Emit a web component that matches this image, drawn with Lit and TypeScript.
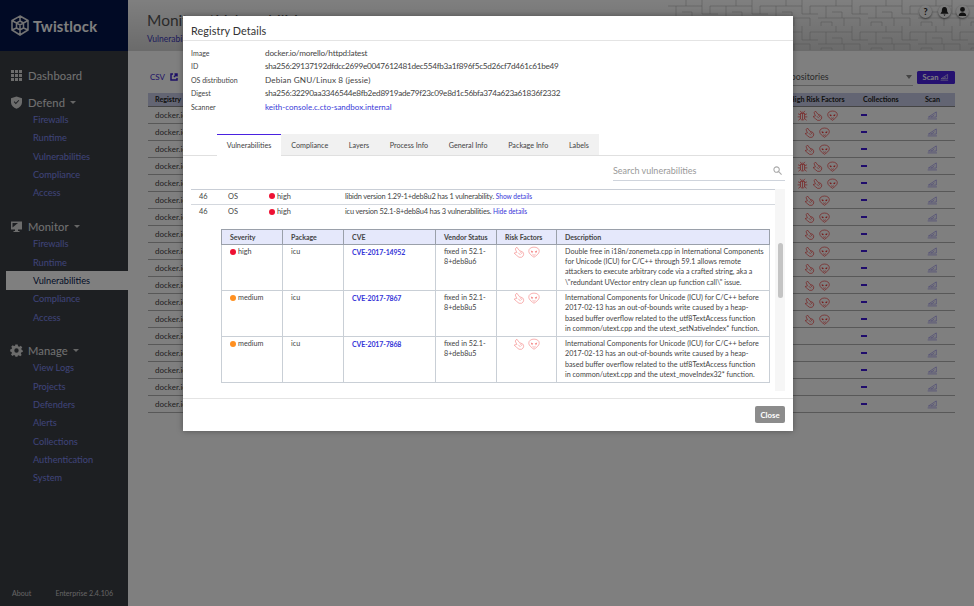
import { LitElement, html, css, svg } from "lit";
import { customElement } from "lit/decorators.js";

const hand = (cls = "risk") => html`<svg class=${cls} viewBox="0 0 16 16"><path d="M5 1.5 L8.5 6 L13 8 C15 10 14.5 13.5 11.5 15 L8 15 C6 13.5 3.5 11.5 1.5 9.5 L5 8.5 L3 4 Z M7 9 L10 12 M9.5 7.5 L12 10.5" /></svg>`;
const skull = (cls = "risk") => html`<svg class=${cls} viewBox="0 0 16 16"><path d="M8 1.5 C12 1.5 15 3.5 15 7 C15 10 11 13 8 15 C5 13 1 10 1 7 C1 3.5 4 1.5 8 1.5 Z M6 11 C7 12.5 9 12.5 10 11" /><path class="fill" d="M3.8 6 L7 7.2 L6 9 L4.3 8.6 Z M12.2 6 L9 7.2 L10 9 L11.7 8.6 Z" /></svg>`;
const bug = () => html`<svg class="risk" viewBox="0 0 16 16"><path d="M5 5 H11 V13 C10 15 6 15 5 13 Z M5.5 5 C6 2.5 10 2.5 10.5 5 M8 5 V14 M5 7 L1.5 5.5 M11 7 L14.5 5.5 M5 10 H1 M11 10 H15 M5 12.5 L2 15 M11 12.5 L14 15 M6 3 L4.5 1.2 M10 3 L11.5 1.2" /></svg>`;
const scan = (cls = "scan-ic") => html`<svg class=${cls} viewBox="0 0 16 14"><path d="M2 10 L13.5 2.5 V10 Z M6 10 L11 6.5 M1 12.7 H14.5" /></svg>`;

const links1 = ["Firewalls", "Runtime", "Vulnerabilities", "Compliance", "Access"];
const links2 = ["View Logs", "Projects", "Defenders", "Alerts", "Collections", "Authentication", "System"];

const bgRows: number[] = [3, 2, 2, 3, 3, 2, 2, 2, 2, 2, 2, 2, 2, 0, 0, 0, 0, 0];

const meta = [
  ["Image", "docker.io/morello/httpd:latest", "img"],
  ["ID", "sha256:29137192dfdcc2699e0047612481dec554fb3a1f896f5c5d26cf7d461c61be49", "hash"],
  ["OS distribution", "Debian GNU/Linux 8 (jessie)", "os"],
  ["Digest", "sha256:32290aa3346544e8fb2ed8919ade79f23c09e8d1c56bfa374a623a61836f2332", "hash"],
];
const tabs = ["Vulnerabilities", "Compliance", "Layers", "Process Info", "General Info", "Package Info", "Labels"];

const vulns = [
  { sev: "high", cve: "CVE-2017-14952", fix: "fixed in 52.1-8+deb8u6", lines: ["Double free in i18n/zonemeta.cpp in International Components", "for Unicode (ICU) for C/C++ through 59.1 allows remote", "attackers to execute arbitrary code via a crafted string, aka a", "\\\"redundant UVector entry clean up function call\\\" issue."] },
  { sev: "medium", cve: "CVE-2017-7867", fix: "fixed in 52.1-8+deb8u5", lines: ["International Components for Unicode (ICU) for C/C++ before", "2017-02-13 has an out-of-bounds write caused by a heap-", "based buffer overflow related to the utf8TextAccess function", "in common/utext.cpp and the utext_setNativeIndex* function."] },
  { sev: "medium", cve: "CVE-2017-7868", fix: "fixed in 52.1-8+deb8u5", lines: ["International Components for Unicode (ICU) for C/C++ before", "2017-02-13 has an out-of-bounds write caused by a heap-", "based buffer overflow related to the utf8TextAccess function", "in common/utext.cpp and the utext_moveIndex32* function."] },
];

const patternCells = svg`<pattern id="circ" width="50" height="26" patternUnits="userSpaceOnUse"><path d="M0 6 H18 V0 M18 6 H34 V14 H50 M8 6 V18 H26 V26 M26 18 H42 V26 M34 6 V0 M0 18 H8 M14 12 H24 V18 M42 14 V6 H50 M3 26 V22 H14 V26" /></pattern>`;

@customElement("app-root")
export class AppRoot extends LitElement {
  static styles = css`
    :host { display: block; position: relative; width: 974px; height: 606px; overflow: hidden; font-family: Lato, "Liberation Sans", sans-serif; color: #333; background: #fff; }
    * { box-sizing: border-box; }
    .page { display: flex; width: 974px; height: 606px; }
    .side { width: 128px; flex: none; background: #3b3e45; display: flex; flex-direction: column; position: relative; }
    .brand { height: 51px; background: #03154a; display: flex; align-items: center; padding-left: 10px; gap: 3px; color: #fff; font-size: 14.8px; font-weight: 700; letter-spacing: .2px; flex: none; }
    .brand svg { width: 20px; height: 21px; fill: none; stroke: #e6e6e6; stroke-width: 1.5; }
    .collapse { position: absolute; left: 128px; top: 0; width: 6px; height: 18px; background: #03154a; display: flex; align-items: center; justify-content: center; }
    .collapse i { border-right: 4px solid #aaa; border-top: 3px solid transparent; border-bottom: 3px solid transparent; }
    nav { display: flex; flex-direction: column; padding-top: 16px; flex: 1; }
    .sec { height: 18px; display: flex; align-items: center; padding: 0 0 2px 10px; gap: 5px; color: #e2e2e2; font-size: 11.2px; letter-spacing: .1px; }
    .sec svg { width: 13px; height: 13px; fill: #d8d8d8; flex: none; }
    .sec .car { border-top: 3px solid #ccc; border-left: 3px solid transparent; border-right: 3px solid transparent; }
    .sub { display: flex; flex-direction: column; margin-top: -1.5px; }
    .sub a { height: 18.33px; display: flex; align-items: center; padding-left: 33px; font-size: 9.2px; color: #7f89ee; }
    .sub a.on { margin-left: 6px; padding-left: 27px; background: #fff; color: #03154a; }
    .g1 { margin-top: 9px; }
    .g2 { margin-top: 16px; }
    .foot { height: 26px; display: flex; justify-content: space-between; padding: 0 15px 0 12px; font-size: 7.1px; color: #c8c8c8; align-items: center; }
    .main { flex: 1; display: flex; flex-direction: column; min-width: 0; }
    .top { height: 51px; flex: none; position: relative; background: linear-gradient(#fff, #d6d6d6); overflow: hidden; padding: 11px 0 0 19px; }
    .top h1 { margin: 0; font-size: 15.5px; font-weight: 400; color: #555; }
    .top .crumb { margin-top: 5px; font-size: 8.5px; color: #3b37b8; }
    .circ { position: absolute; left: 540px; top: 0; width: 306px; height: 50px; fill: none; }
    .circ path { stroke: #a8a8a8; stroke-width: .5; fill: none; }
    .tools { position: absolute; right: 5px; top: 5px; display: flex; gap: 5.5px; }
    .tools span { width: 13px; height: 13px; border-radius: 50%; background: #f6f6f6; box-shadow: 0 1px 2px rgba(0, 0, 0, .5); color: #222; font-size: 9px; font-weight: 700; display: flex; align-items: center; justify-content: center; }
    .tools svg { width: 9px; height: 9px; fill: #222; }
    .content { flex: 1; padding: 0 19px 0 20px; display: flex; flex-direction: column; }
    .bar { height: 42px; display: flex; align-items: center; justify-content: space-between; padding-top: 10px; }
    .csv { margin-left: 2px; display: flex; align-items: center; gap: 5px; font-size: 8px; color: #3b1fd0; }
    .csv svg { width: 8px; height: 8px; fill: none; stroke: #3b1fd0; stroke-width: 1.5; }
    .filter { display: flex; align-items: center; gap: 4px; }
    .repo { width: 245px; height: 18px; border-bottom: 1px solid #bbb; display: flex; align-items: center; justify-content: space-between; padding-left: 113px; font-size: 8.8px; color: #555; }
    .repo i { border-top: 4px solid #888; border-left: 3px solid transparent; border-right: 3px solid transparent; margin-right: 1px; }
    .btn { width: 38px; height: 13px; background: #4a22e0; color: #fff; border-radius: 1.5px; font-size: 7.5px; font-weight: 700; display: flex; align-items: center; justify-content: center; gap: 2px; }
    .scan-w { width: 9px; height: 8px; fill: none; stroke: #fff; stroke-width: 1; }
    .thead, .trow { display: grid; grid-template-columns: 640px 58px 64px 1fr; align-items: center; }
    .thead { height: 14px; background: #c6cbe6; border-bottom: 1px solid #888; font-size: 7.2px; font-weight: 700; color: #222; white-space: nowrap; }
    .thead span:first-child, .trow span:first-child { padding-left: 7px; }
    .thead .pad { padding-left: 17px; }
    .thead .c, .trow .c { text-align: center; display: flex; justify-content: center; align-items: center; gap: 4px; }
    .trow { height: 17px; border-bottom: 1px solid #b0b0b0; font-size: 8px; color: #444; }
    .risk { width: 11px; height: 11px; fill: none; stroke: #f03c3c; stroke-width: 1; }
    .risk .fill { fill: #f03c3c; stroke: none; }
    .dash { display: block; width: 6px; height: 2.5px; background: #3f18d8; margin-left: 15px; }
    .scan-ic { width: 11px; height: 10px; fill: none; stroke: #8a82e8; stroke-width: .9; }
    .scrim { position: absolute; inset: 0; background: rgba(0, 0, 0, .5); }
    .modal { position: absolute; left: 183px; top: 16px; width: 610px; height: 415px; background: #fff; box-shadow: 0 0 6px rgba(0, 0, 0, .35); display: flex; flex-direction: column; }
    .mh { height: 25px; flex: none; border-bottom: 1px solid #e4e4e4; padding: 7px 0 0 8px; font-size: 10.8px; color: #333; line-height: 15px; letter-spacing: .1px; }
    .meta { padding: 5px 0 0 8px; height: 93px; flex: none; }
    .meta div { display: grid; grid-template-columns: 74px 1fr; height: 13.5px; align-items: center; font-size: 8.2px; color: #444; white-space: nowrap; }
    .meta b { font-weight: 400; font-size: 7px; color: #444; }
    .meta a { color: #3a3ad8; font-size: 8px; }
    .meta .hash { letter-spacing: -.3px; }
    .meta .img { letter-spacing: -.19px; }
    .meta .os { letter-spacing: .13px; }
    .tabs { height: 22px; flex: none; border-bottom: 1px solid #e0e0e0; padding-left: 34px; display: flex; }
    .tabs span { height: 21px; background: #f1f1f1; padding: 1px 10.3px 0; display: flex; align-items: center; font-size: 7.2px; color: #444; white-space: nowrap; }
    .tabs span.on { background: #fff; border-top: 1.5px solid #4a22e0; height: 22px; padding: 0 10px; width: 64px; justify-content: center; }
    .search { height: 33px; flex: none; padding: 0 8px 8px 430px; display: flex; align-items: flex-end; }
    .search div { flex: 1; height: 25px; border-bottom: 1px solid #cfd4dc; display: flex; align-items: center; justify-content: space-between; font-size: 9px; color: #999; padding: 4px 0 0; }
    .search svg { width: 9px; height: 9px; fill: none; stroke: #aaa; stroke-width: 1.2; margin-right: 3px; }
    .pane { height: 202px; flex: none; margin: 0 8px; display: flex; overflow: hidden; }
    .list { flex: 1; min-width: 0; border-top: 1px solid #c9ced6; }
    .track { width: 10px; flex: none; background: #f6f6f6; padding: 54px 2px 0 3px; }
    .track i { display: block; height: 55px; background: #c4c4c4; border-radius: 3px; }
    .vr { height: 15px; display: grid; grid-template-columns: 29px 41px 76px 1fr; align-items: center; font-size: 7.4px; color: #444; border-bottom: 1px solid #d4d8de; padding: 0 0 2px 8px; white-space: nowrap; }
    .vr:nth-child(2) { border-bottom: 0; }
    .msg { letter-spacing: -.18px; }
    .vr a { color: #3535d8; font-size: 6.6px; letter-spacing: 0; }
    .sev { display: flex; align-items: center; gap: 2px; }
    .dot { width: 6px; height: 6px; border-radius: 50%; background: #ee1133; flex: none; }
    .dot.medium { background: #ff9020; }
    table { border-collapse: collapse; table-layout: fixed; width: 549px; margin: 8.5px 0 0 30px; font-size: 7.2px; color: #444; line-height: 10.3px; }
    th, td { border: 1px solid #c9cfd6; padding: 2px 8px; text-align: left; vertical-align: top; overflow: hidden; }
    th { background: #e5e8fb; height: 14.5px; border-color: #9aa0aa; font-weight: 700; color: #444; font-size: 7px; white-space: nowrap; }
    tbody tr { height: 45px; }
    td a { color: #3535d8; font-weight: 700; font-size: 7px; letter-spacing: -.15px; }
    td.desc { font-size: 7.15px; white-space: nowrap; }
    td.rf { padding: 1px 0 0; }
    td.rf div { display: flex; justify-content: center; gap: 3px; }
    .rm { width: 12px; height: 12px; fill: none; stroke: #f58c8c; stroke-width: .9; }
    .rm .fill { fill: #f58c8c; stroke: none; }
    .mf { flex: 1; margin-top: 7px; border-top: 1px solid #e4e4e4; display: flex; justify-content: flex-end; padding: 7px 8px 0 0; align-items: flex-start; }
    .close { width: 30px; height: 17px; background: #8c8c8c; color: #fff; font-size: 7.8px; font-weight: 700; border-radius: 2px; display: flex; align-items: center; justify-content: center; }
  `;

  private renderSide() {
    return html`<aside class="side">
      <div class="brand">
        <svg viewBox="0 0 20 21"><path d="M10 1 L18 5.5 V15 L10 20 L2 15 V5.5 Z M10 1 V6 M2 5.5 L6.5 8 M18 5.5 L13.5 8 M10 6 L13.5 8 V13 L10 15 L6.5 13 V8 Z M10 15 V20 M6.5 13 L2 15 M13.5 13 L18 15 M10 10 V15 M6.5 8 L10 10 L13.5 8" /></svg>
        <span>Twistlock</span>
      </div>
      <div class="collapse"><i></i></div>
      <nav>
        <div class="sec"><svg viewBox="0 0 13 13"><path d="M1 1h3v3H1zM5 1h3v3H5zM9 1h3v3H9zM1 5h3v3H1zM5 5h3v3H5zM9 5h3v3H9zM1 9h3v3H1zM5 9h3v3H5zM9 9h3v3H9z" /></svg>Dashboard</div>
        <div class="sec g1"><svg viewBox="0 0 13 13"><path fill-rule="evenodd" d="M6.5 .5 L12 2.2 V6.5 C12 9.5 9.5 11.5 6.5 12.8 C3.5 11.5 1 9.5 1 6.5 V2.2 Z M3.8 6 L5.8 8.2 L9.3 4.6 L8.5 3.9 L5.8 6.7 L4.5 5.3 Z" /></svg>Defend<span class="car"></span></div>
        <div class="sub">${links1.map((l) => html`<a>${l}</a>`)}</div>
        <div class="sec g2"><svg viewBox="0 0 13 13"><path fill-rule="evenodd" d="M1 1.5 H12 V9.5 H8 V11 H9.5 V12 H3.5 V11 H5 V9.5 H1 Z M2.5 7.5 L8 3 H2.5 Z" /></svg>Monitor<span class="car"></span></div>
        <div class="sub">${links1.map((l, i) => html`<a class=${i === 2 ? "on" : ""}>${l}</a>`)}</div>
        <div class="sec g2"><svg viewBox="0 0 13 13"><path fill-rule="evenodd" d="M5.3 .5 H7.7 L8 2.2 L9.4 2.8 L10.8 1.8 L12.3 3.5 L11.2 4.8 L11.8 6 L12.8 6.5 V8 L11.4 8.3 L10.8 9.6 L11.7 11 L10.2 12.3 L8.8 11.3 L7.7 11.7 L7.5 12.8 H5.4 L5.1 11.5 L3.9 11 L2.5 11.9 L1 10.4 L2 9 L1.5 7.9 L.2 7.6 V5.5 L1.6 5.1 L2.1 4 L1.2 2.7 L2.7 1.2 L4 2.1 L5.1 1.7 Z M6.5 4.3 A2.2 2.2 0 1 0 6.5 8.7 A2.2 2.2 0 1 0 6.5 4.3 Z" /></svg>Manage<span class="car"></span></div>
        <div class="sub">${links2.map((l) => html`<a>${l}</a>`)}</div>
      </nav>
      <div class="foot"><span>About</span><span>Enterprise 2.4.106</span></div>
    </aside>`;
  }

  private renderBack() {
    return html`<main class="main">
      <header class="top">
        <svg class="circ"><defs>${patternCells}</defs><rect width="306" height="50" fill="url(#circ)" /></svg>
        <h1>Monitor / Vulnerabilities</h1>
        <div class="crumb">Vulnerabilities</div>
        <div class="tools">
          <span>?</span>
          <span><svg viewBox="0 0 10 10"><path d="M5 0 C7.5 0 8 2 8 5 L9.5 7.5 H.5 L2 5 C2 2 2.5 0 5 0 Z M3.8 8.3 H6.2 L5 10 Z" /></svg></span>
          <span><svg viewBox="0 0 10 10"><path d="M5 0 A2.5 2.5 0 1 1 5 5.4 A2.5 2.5 0 1 1 5 0 Z M.8 10 C.8 6.8 3 6 5 6 C7 6 9.2 6.8 9.2 10 Z" /></svg></span>
        </div>
      </header>
      <section class="content">
        <div class="bar">
          <div class="csv">CSV <svg viewBox="0 0 8 8"><path d="M3 1 H1 V7 H7 V5 M4 4 L7 1 M4.5 1 H7 V3.5" /></svg></div>
          <div class="filter">
            <div class="repo"><span>Repositories</span><i></i></div>
            <div class="btn">Scan ${scan("scan-w")}</div>
          </div>
        </div>
        <div class="thead"><span>Registry</span><span class="c">High Risk Factors</span><span class="pad">Collections</span><span class="c">Scan</span></div>
        ${bgRows.map((n) => html`<div class="trow">
          <span>docker.io</span>
          <span class="c">${n === 3 ? bug() : ""}${n ? hand() : ""}${n ? skull() : ""}</span>
          <span><i class="dash"></i></span>
          <span class="c">${scan()}</span>
        </div>`)}
      </section>
    </main>`;
  }

  private renderModal() {
    return html`<div class="modal">
      <div class="mh">Registry Details</div>
      <div class="meta">
        ${meta.map(([k, v, c]) => html`<div><b>${k}</b><span class=${c}>${v}</span></div>`)}
        <div><b>Scanner</b><a>keith-console.c.cto-sandbox.internal</a></div>
      </div>
      <div class="tabs">${tabs.map((t, i) => html`<span class=${i === 0 ? "on" : ""}>${t}</span>`)}</div>
      <div class="search"><div><span>Search vulnerabilities</span><svg viewBox="0 0 10 10"><circle cx="4" cy="4" r="3" /><path d="M6.3 6.3 L9.5 9.5" /></svg></div></div>
      <div class="pane">
        <div class="list">
          <div class="vr"><span>46</span><span>OS</span><span class="sev"><i class="dot"></i>high</span><span class="msg">libidn version 1.29-1+deb8u2 has 1 vulnerability. <a>Show details</a></span></div>
          <div class="vr"><span>46</span><span>OS</span><span class="sev"><i class="dot"></i>high</span><span class="msg">icu version 52.1-8+deb8u4 has 3 vulnerabilities. <a>Hide details</a></span></div>
          <table>
            <colgroup><col style="width:61px" /><col style="width:61px" /><col style="width:92px" /><col style="width:61px" /><col style="width:60px" /><col /></colgroup>
            <thead><tr><th>Severity</th><th>Package</th><th>CVE</th><th>Vendor Status</th><th>Risk Factors</th><th>Description</th></tr></thead>
            <tbody>
              ${vulns.map((v) => html`<tr>
                <td><span class="sev"><i class="dot ${v.sev}"></i>${v.sev}</span></td>
                <td>icu</td>
                <td><a>${v.cve}</a></td>
                <td>${v.fix}</td>
                <td class="rf"><div>${hand("rm")}${skull("rm")}</div></td>
                <td class="desc">${v.lines.map((l) => html`${l}<br />`)}</td>
              </tr>`)}
            </tbody>
          </table>
        </div>
        <div class="track"><i></i></div>
      </div>
      <div class="mf"><div class="close">Close</div></div>
    </div>`;
  }

  render() {
    return html`<div class="page">${this.renderSide()}${this.renderBack()}</div>
      <div class="scrim"></div>
      ${this.renderModal()}`;
  }
}
